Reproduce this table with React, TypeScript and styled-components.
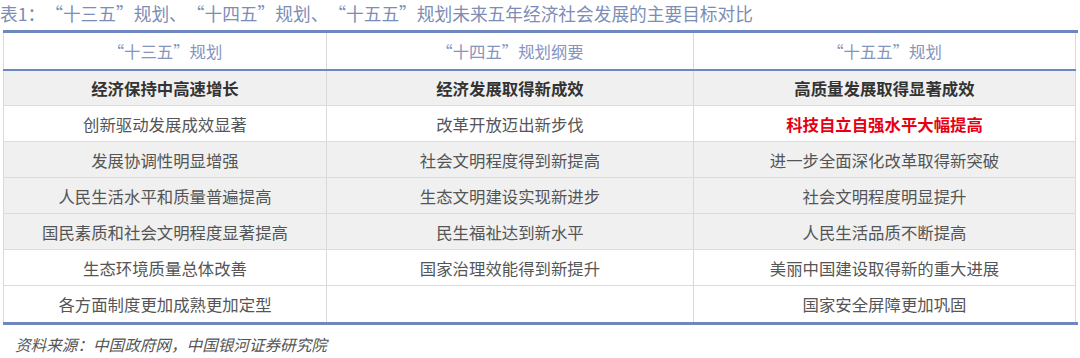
import React from "react";
import styled, { createGlobalStyle } from "styled-components";

const Global = createGlobalStyle`
  html, body { margin: 0; padding: 0; background: #fff; }
  body { font-family: "Noto Sans CJK SC", "Noto Sans", sans-serif; }
`;

const Page = styled.div`
  width: 1080px;
  height: 358px;
  display: flex;
  flex-direction: column;
  overflow: hidden;
`;

const Title = styled.div`
  height: 30px;
  line-height: 26px;
  font-size: 17.7px;
  color: #7d8db6;
  white-space: nowrap;
  text-spacing-trim: space-all;
`;

const Quote = styled.span`
  font-feature-settings: "fwid" 1;
`;

const Table = styled.div`
  margin-left: 3px;
  width: 1075px;
  border-top: 3px solid #6f87bf;
  border-bottom: 3px solid #6f87bf;
`;

const Row = styled.div<{ $bg?: string; $h: number; $line?: string }>`
  display: grid;
  grid-template-columns: 323px 367px 383px;
  height: ${(p) => p.$h}px;
  background: ${(p) => p.$bg || "#fff"};
  border-bottom: ${(p) => p.$line || "none"};
  width: 1073px;
  box-sizing: content-box;
`;

const Cell = styled.div<{ $tone?: "head" | "bold" | "red" | "body"; $last?: boolean }>`
  box-sizing: border-box;
  border-left: 1px solid #d9d9d9;
  border-right: ${(p) => (p.$last ? "1px solid #d9d9d9" : "none")};
  display: flex;
  align-items: center;
  justify-content: center;
  font-size: 16.4px;
  line-height: 24px;
  white-space: nowrap;
  text-spacing-trim: space-all;
  font-weight: ${(p) => (p.$tone === "bold" || p.$tone === "red" ? 700 : 400)};
  color: ${(p) =>
    p.$tone === "head"
      ? "#8595bd"
      : p.$tone === "bold"
      ? "#333333"
      : p.$tone === "red"
      ? "#e60012"
      : "#555555"};
`;

const Source = styled.div`
  margin-top: 7px;
  padding-left: 15px;
  line-height: 24px;
  font-size: 15.6px;
  font-style: italic;
  color: #555;
  text-spacing-trim: space-all;
`;

type Tone = "head" | "bold" | "red" | "body";
type RowDef = { cells: [string, string, string]; bg?: string; tones?: [Tone, Tone, Tone] };

const GRAY = "#f0f0f0";

const rows: RowDef[] = [
  { cells: ["创新驱动发展成效显著", "改革开放迈出新步伐", "科技自立自强水平大幅提高"], tones: ["body", "body", "red"] },
  { cells: ["发展协调性明显增强", "社会文明程度得到新提高", "进一步全面深化改革取得新突破"], bg: GRAY },
  { cells: ["人民生活水平和质量普遍提高", "生态文明建设实现新进步", "社会文明程度明显提升"], bg: GRAY },
  { cells: ["国民素质和社会文明程度显著提高", "民生福祉达到新水平", "人民生活品质不断提高"], bg: GRAY },
  { cells: ["生态环境质量总体改善", "国家治理效能得到新提升", "美丽中国建设取得新的重大进展"] },
  { cells: ["各方面制度更加成熟更加定型", "", "国家安全屏障更加巩固"] },
];

const Plan = ({ n, rest }: { n: string; rest: string }) => (
  <>
    <Quote>“</Quote>
    {n}
    <Quote>”</Quote>
    {rest}
  </>
);

export default function App() {
  return (
    <Page lang="zh-CN">
      <Global />
      <Title>
        表1：<Plan n="十三五" rest="规划、" />
        <Plan n="十四五" rest="规划、" />
        <Plan n="十五五" rest="规划未来五年经济社会发展的主要目标对比" />
      </Title>
      <Table>
        <Row $h={36} $line="2px solid #6f87bf">
          <Cell $tone="head"><span><Plan n="十三五" rest="规划" /></span></Cell>
          <Cell $tone="head"><span><Plan n="十四五" rest="规划纲要" /></span></Cell>
          <Cell $tone="head" $last><span><Plan n="十五五" rest="规划" /></span></Cell>
        </Row>
        <Row $h={34} $bg={GRAY} $line="1px solid #dcdcdc">
          <Cell $tone="bold">经济保持中高速增长</Cell>
          <Cell $tone="bold">经济发展取得新成效</Cell>
          <Cell $tone="bold" $last>高质量发展取得显著成效</Cell>
        </Row>
        {rows.map((r, i) => {
          const isLast = i === rows.length - 1;
          const tones = r.tones || ["body", "body", "body"];
          return (
            <Row key={i} $h={isLast ? 36 : 35} $bg={r.bg} $line={isLast ? "none" : "1px solid #dcdcdc"}>
              <Cell $tone={tones[0]}>{r.cells[0]}</Cell>
              <Cell $tone={tones[1]}>{r.cells[1]}</Cell>
              <Cell $tone={tones[2]} $last>{r.cells[2]}</Cell>
            </Row>
          );
        })}
      </Table>
      <Source>资料来源：中国政府网，中国银河证券研究院</Source>
    </Page>
  );
}
